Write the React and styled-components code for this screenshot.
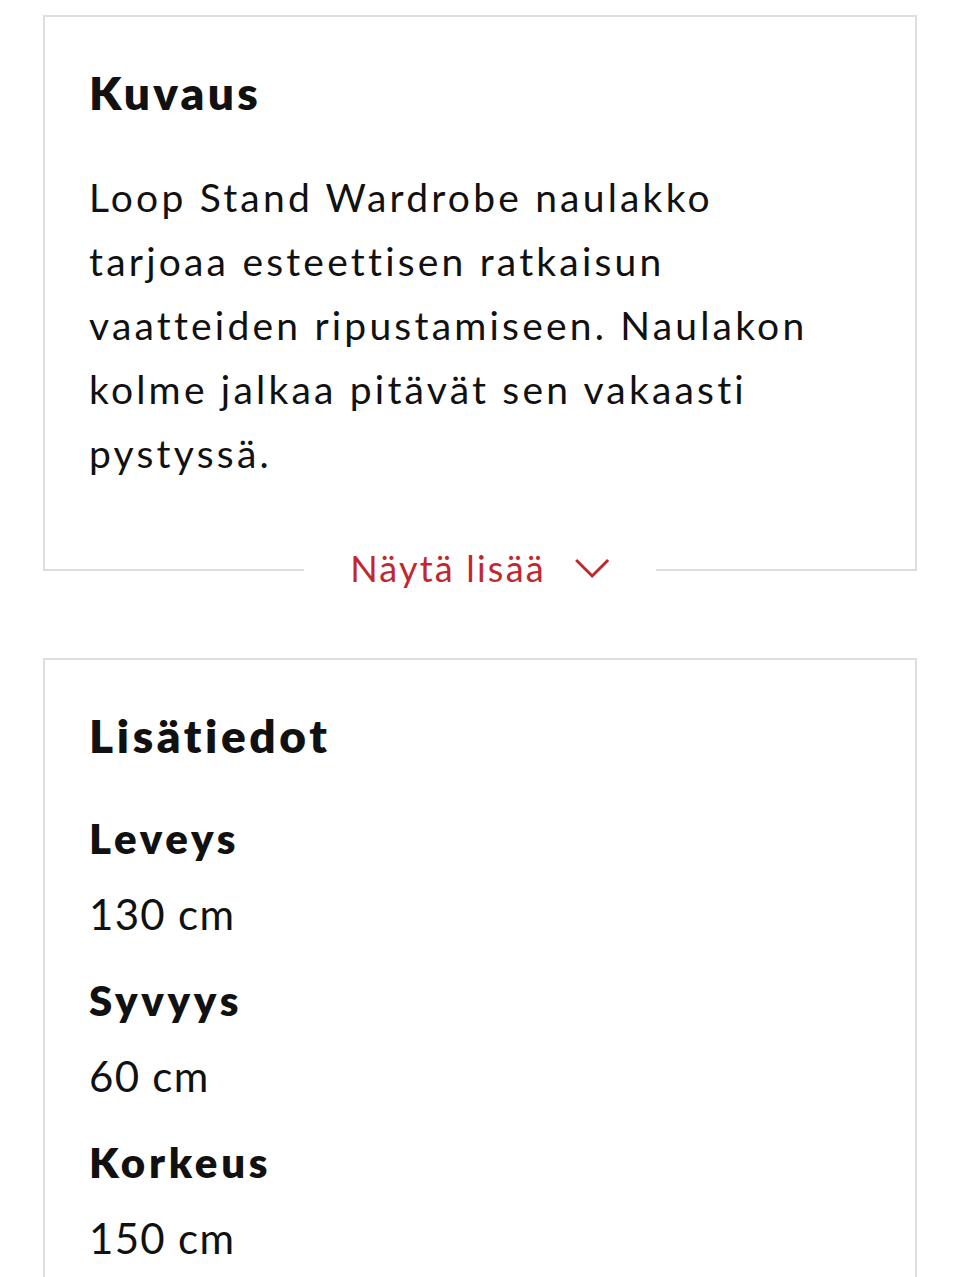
import React from 'react'
import styled, { createGlobalStyle } from 'styled-components'

const GlobalStyle = createGlobalStyle`
    body {
        margin: 0;
        background: #fff;
        font-family: "Lato", "Open Sans", sans-serif;
        color: #111;
    }
`;

const Page = styled.div`
    padding: 15px 43px 0 43px;
    display: flex;
    flex-direction: column;
    gap: 87px;
`;

const Card = styled.section`
    position: relative;
    border: 2px solid #dedede;
    padding: 48px 44px ${p => p.$bottom || '60px'} 44px;
`;

const Heading = styled.h2`
    margin: 0;
    font-size: 46px;
    line-height: 56px;
    font-weight: 800;
    letter-spacing: ${p => p.$spacing || '3.3px'};
`;

const Text = styled.p`
    margin: 44px 0 0 0;
    max-width: 760px;
    font-size: 39px;
    line-height: 64px;
    letter-spacing: 3.2px;
`;

const MoreButton = styled.button`
    position: absolute;
    left: 50%;
    bottom: -21px;
    transform: translateX(-50%);
    border: none;
    background: #fff;
    padding: 0 46px;
    display: flex;
    align-items: center;
    gap: 28px;
    font-family: inherit;
    font-size: 36px;
    line-height: 44px;
    letter-spacing: 2.2px;
    white-space: nowrap;
    color: #c1272d;
    cursor: pointer;
`;

const Specs = styled.dl`
    margin: 0;
    padding-top: 36px;
`;

const Label = styled.dt`
    font-size: 42px;
    line-height: 76px;
    font-weight: 800;
    letter-spacing: 3.7px;
`;

const Value = styled.dd`
    margin: 0 0 10px 0;
    font-size: 42px;
    line-height: 76px;
    letter-spacing: 1.3px;
`;

const specs = [
    ['Leveys', '130 cm'],
    ['Syvyys', '60 cm'],
    ['Korkeus', '150 cm'],
];

export default function App() {
  return (
    <Page>
        <GlobalStyle />
        <Card $bottom="84px">
            <Heading>Kuvaus</Heading>
            <Text>Loop Stand Wardrobe naulakko tarjoaa esteettisen ratkaisun
                vaatteiden ripustamiseen. Naulakon kolme jalkaa pitävät sen
                vakaasti pystyssä.</Text>
            <MoreButton>
                Näytä lisää
                <svg width="36" height="22" viewBox="0 0 36 22" fill="none">
                    <polyline points="2,3 18,19 34,3" stroke="currentColor" strokeWidth="3" />
                </svg>
            </MoreButton>
        </Card>
        <Card>
            <Heading $spacing="3.6px">Lisätiedot</Heading>
            <Specs>
                {specs.map(([label, value]) => (
                    <React.Fragment key={label}>
                        <Label>{label}</Label>
                        <Value>{value}</Value>
                    </React.Fragment>
                ))}
            </Specs>
        </Card>
    </Page>
  )
}
